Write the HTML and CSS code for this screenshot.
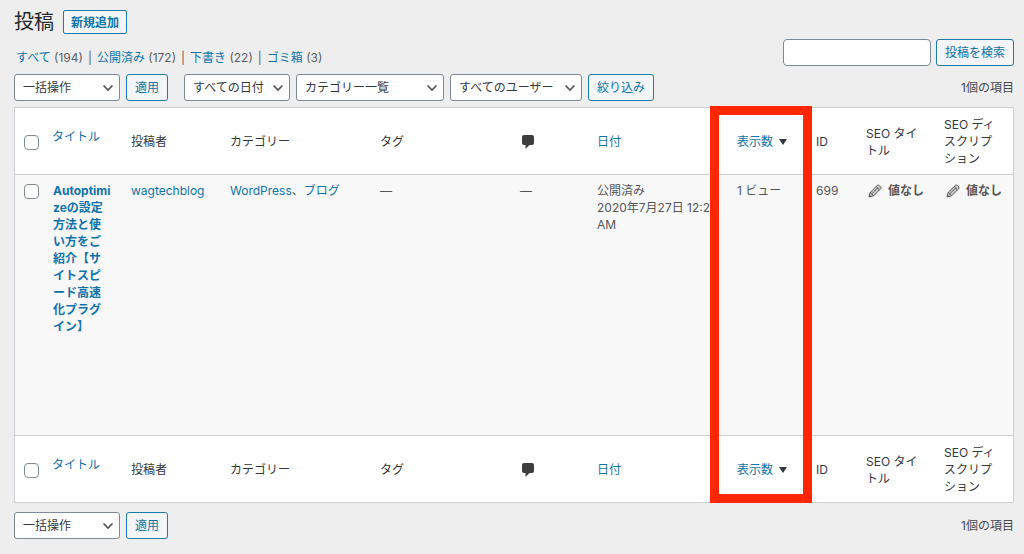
FILE: index.html
```html
<!DOCTYPE html>
<html lang="ja">
<head>
<meta charset="utf-8">
<meta name="viewport" content="width=device-width, initial-scale=1">
<title>投稿</title>
<link rel="stylesheet" href="styles.css">
</head>
<body>
<svg class="defs" aria-hidden="true">
  <symbol id="chevron" viewBox="0 0 12 12"><path d="M1.500 3.500 6 8l4.500-4.500" fill="none" stroke="currentColor" stroke-width="1.700"/></symbol>
  <symbol id="comment" viewBox="0 0 14 14"><path d="M3 0h8a2 2 0 0 1 2 2v6a2 2 0 0 1-2 2H8.500L4.500 14v-4H3a2 2 0 0 1-2-2V2a2 2 0 0 1 2-2z" fill="currentColor"/></symbol>
  <symbol id="pencil" viewBox="0 0 14 14"><path d="M1 13l1.200-4.600L9.300 1.500c.7-.7 1.500-.5 2 0l1.300 1.300c.6.6.6 1.400 0 2L5.600 11.800z" fill="#ccc" stroke="currentColor" stroke-linejoin="round"/><path d="M2.200 8.400l3.400 3.400M8.200 2.600l3.300 3.300M3.800 9.800l6-6" fill="none" stroke="currentColor"/><path d="M1 13l.6-2.300L3.300 12.400z" fill="currentColor"/></symbol>
</svg>
<main class="page">
  <header class="heading">
    <h1 class="title">投稿</h1>
    <a class="button add-new" href="#">新規追加</a>
  </header>

  <div class="subheading">
    <ul class="views">
      <li><a href="#">すべて</a> (194)</li>
      <li><a href="#">公開済み</a> (172)</li>
      <li><a href="#">下書き</a> (22)</li>
      <li><a href="#">ゴミ箱</a> (3)</li>
    </ul>
    <form class="search">
      <input class="search-input" type="search" aria-label="投稿を検索">
      <button class="button" type="button">投稿を検索</button>
    </form>
  </div>

  <div class="tablenav">
    <div class="actions">
      <div class="select bulk"><select aria-label="一括操作"><option>一括操作</option></select><svg class="chevron"><use href="#chevron"/></svg></div>
      <button class="button" type="button">適用</button>
    </div>
    <div class="actions">
      <div class="select dates"><select aria-label="日付で絞り込む"><option>すべての日付</option></select><svg class="chevron"><use href="#chevron"/></svg></div>
      <div class="select categories"><select aria-label="カテゴリーで絞り込む"><option>カテゴリー一覧</option></select><svg class="chevron"><use href="#chevron"/></svg></div>
      <div class="select users"><select aria-label="ユーザーで絞り込む"><option>すべてのユーザー</option></select><svg class="chevron"><use href="#chevron"/></svg></div>
      <button class="button" type="button">絞り込み</button>
    </div>
    <span class="count">1個の項目</span>
  </div>

  <div class="table-wrap">
    <table class="posts">
      <colgroup>
        <col class="col-check"><col class="col-title"><col class="col-author"><col class="col-category"><col class="col-tags"><col class="col-comments"><col class="col-date"><col class="col-views"><col class="col-id"><col class="col-seo-title"><col class="col-seo-desc">
      </colgroup>
      <thead>
        <tr>
          <th class="check"><input type="checkbox" aria-label="すべて選択"></th>
          <th class="sortable"><a href="#">タイトル</a></th>
          <th>投稿者</th>
          <th>カテゴリー</th>
          <th>タグ</th>
          <th><svg class="comment" role="img" aria-label="コメント"><use href="#comment"/></svg></th>
          <th><a href="#">日付</a></th>
          <th><a class="sorted" href="#">表示数</a></th>
          <th>ID</th>
          <th>SEO タイトル</th>
          <th class="narrow">SEO ディスクリプション</th>
        </tr>
      </thead>
      <tbody>
        <tr>
          <td class="check"><input type="checkbox" aria-label="投稿を選択"></td>
          <td class="post-title"><a href="#">Autoptimizeの設定方法と使い方をご紹介【サイトスピード高速化プラグイン】</a></td>
          <td><a href="#">wagtechblog</a></td>
          <td><a href="#">WordPress</a>、<a href="#">ブログ</a></td>
          <td>—</td>
          <td>—</td>
          <td>公開済み<br>2020年7月27日 12:27 AM</td>
          <td>1 ビュー</td>
          <td>699</td>
          <td><span class="seo"><svg class="pencil"><use href="#pencil"/></svg>値なし</span></td>
          <td><span class="seo"><svg class="pencil"><use href="#pencil"/></svg>値なし</span></td>
        </tr>
      </tbody>
      <tfoot>
        <tr>
          <th class="check"><input type="checkbox" aria-label="すべて選択"></th>
          <th class="sortable"><a href="#">タイトル</a></th>
          <th>投稿者</th>
          <th>カテゴリー</th>
          <th>タグ</th>
          <th><svg class="comment" role="img" aria-label="コメント"><use href="#comment"/></svg></th>
          <th><a href="#">日付</a></th>
          <th><a class="sorted" href="#">表示数</a></th>
          <th>ID</th>
          <th>SEO タイトル</th>
          <th class="narrow">SEO ディスクリプション</th>
        </tr>
      </tfoot>
    </table>
    <div class="highlight"></div>
  </div>

  <div class="tablenav">
    <div class="actions">
      <div class="select bulk"><select aria-label="一括操作"><option>一括操作</option></select><svg class="chevron"><use href="#chevron"/></svg></div>
      <button class="button" type="button">適用</button>
    </div>
    <span class="count">1個の項目</span>
  </div>
</main>
</body>
</html>
```
FILE: styles.css
```css
* { box-sizing: border-box; }

body {
  margin: 0;
  background: #eee;
  color: #464a4d;
  font: 12px/17px Inter, "Noto Sans CJK JP", sans-serif;
}

a { color: #0f73aa; text-decoration: none; }

.defs { position: absolute; width: 0; height: 0; }

.page { padding: 8px 10px 8px 14px; }

.heading { display: flex; align-items: center; gap: 9px; height: 28px; }

.title { margin: 0; color: #23282d; font-size: 20px; font-weight: 400; line-height: 28px; }

.button {
  display: inline-flex;
  align-items: center;
  justify-content: center;
  height: 27px;
  padding: 0 8px;
  border: 1px solid #1c7ba9;
  border-radius: 3px;
  background: #f3f5f6;
  color: #0f73a4;
  font: inherit;
  white-space: nowrap;
}

.add-new { height: 24px; padding: 0 7px; border-radius: 2px; font-weight: 700; }

.subheading { display: flex; align-items: flex-end; justify-content: space-between; margin-top: 3px; }

.views { display: flex; margin: 0; padding: 0 2px; list-style: none; color: #5b6064; line-height: 16px; }

.views li + li::before { content: "|"; margin: 0 5px; }

.search { display: flex; gap: 5px; }

.search-input {
  width: 148px;
  height: 27px;
  padding: 0 8px;
  border: 1px solid #7e8993;
  border-radius: 4px;
  background: #fff;
  font: inherit;
}

.tablenav { display: flex; align-items: center; gap: 16px; margin-top: 8px; }

.actions { display: flex; gap: 6px; }

.select { position: relative; }

.select select {
  width: 100%;
  height: 27px;
  padding: 0 20px 0 8px;
  border: 1px solid #7e8993;
  border-radius: 3px;
  background: #fff;
  color: #32373c;
  font: inherit;
  appearance: none;
}

.chevron {
  position: absolute;
  top: 8px;
  right: 6px;
  width: 12px;
  height: 12px;
  color: #50565b;
  pointer-events: none;
}

.bulk { width: 106px; }
.dates { width: 106px; }
.categories { width: 148px; }
.users { width: 132px; }

.count { margin-left: auto; }

.table-wrap { position: relative; margin: 6px 0 9px; }

.posts {
  width: 100%;
  table-layout: fixed;
  border: 1px solid #ccd0d4;
  border-spacing: 0;
  background: #fff;
}

.col-check { width: 29px; }
.col-title { width: 79px; }
.col-author { width: 99px; }
.col-category { width: 150px; }
.col-tags { width: 140px; }
.col-comments { width: 77px; }
.col-date { width: 140px; }
.col-views { width: 79px; }
.col-id { width: 50px; }
.col-seo-title { width: 78px; }
.col-seo-desc { width: 77px; }

.posts th, .posts td { text-align: left; }

.posts th { padding: 8px 8px 7px; color: #32373c; font-weight: 400; vertical-align: middle; }

.posts td {
  height: 262px;
  padding: 7px 8px;
  border-top: 1px solid #ccd0d4;
  border-bottom: 1px solid #ccd0d4;
  background: #f8f8f8;
  color: #555;
  vertical-align: top;
}

.posts .check { padding-right: 0; padding-left: 9px; }

.check input {
  display: block;
  width: 15px;
  height: 15px;
  margin: 2px 0 0;
  border: 1px solid #7e8993;
  border-radius: 4px;
  background: #fff;
  appearance: none;
}

.posts .sortable { padding-bottom: 18px; }

.posts .narrow { padding-right: 12px; }

.posts .post-title {
  padding-right: 12px;
  padding-left: 9px;
  font-weight: 700;
  line-break: anywhere;
}

.sorted::after {
  content: "";
  display: inline-block;
  margin-left: 6px;
  border: solid transparent;
  border-width: 6px 4px 0;
  border-top-color: #32373c;
  vertical-align: 1px;
}

.comment { display: block; width: 14px; height: 14px; margin-left: 1px; color: #3c3c3c; }

.seo { display: flex; align-items: center; gap: 6px; font-weight: 700; white-space: nowrap; }

.pencil { flex: none; width: 14px; height: 14px; margin-left: 2px; }

.highlight {
  position: absolute;
  top: -1px;
  right: 202px;
  bottom: 0;
  width: 102px;
  border: 9px solid #ff2600;
  pointer-events: none;
}
```
